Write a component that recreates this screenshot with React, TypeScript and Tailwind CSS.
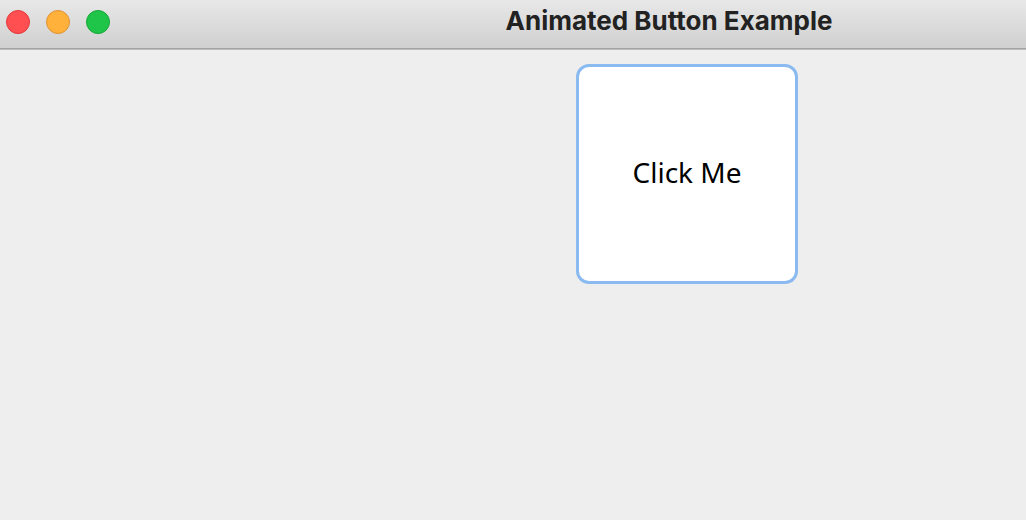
import React from "react";

const controls = [
  { label: "Close", style: "border-[#e2383a] bg-[#ff4f50]" },
  { label: "Minimize", style: "border-[#de9234] bg-[#ffb13c]" },
  { label: "Zoom", style: "border-[#17a637] bg-[#1fc549]" },
];

export default function App() {
  return (
    <div className="flex min-h-screen flex-col bg-[#eeeeee]">
      <header className="flex h-[49px] items-start border-b border-[#a3a3a3] bg-linear-to-b from-[#e8e8e8] to-[#d0d0d0] shadow-[0_1px_0_#bdbdbd]">
        <div className="flex w-[312px] shrink-0 gap-4 pl-1.5 pt-2.5">
          {controls.map((c) => (
            <button
              key={c.label}
              type="button"
              aria-label={c.label}
              className={`size-6 rounded-full border ${c.style}`}
            />
          ))}
        </div>
        <h1 className="grow whitespace-nowrap pt-1 text-center font-['Inter',sans-serif] text-[26px] leading-[34px] font-bold text-[#222222] [font-variant-ligatures:none]">
          Animated Button Example
        </h1>
      </header>
      <main className="flex grow items-start justify-center pt-[15px] pl-[348px]">
        <button
          type="button"
          className="h-[220px] w-[222px] rounded-[13px] border-3 border-[#8abaf0] bg-white pb-1 font-['Noto_Sans',sans-serif] text-[28px] leading-8 text-black"
        >
          Click Me
        </button>
      </main>
    </div>
  );
}
